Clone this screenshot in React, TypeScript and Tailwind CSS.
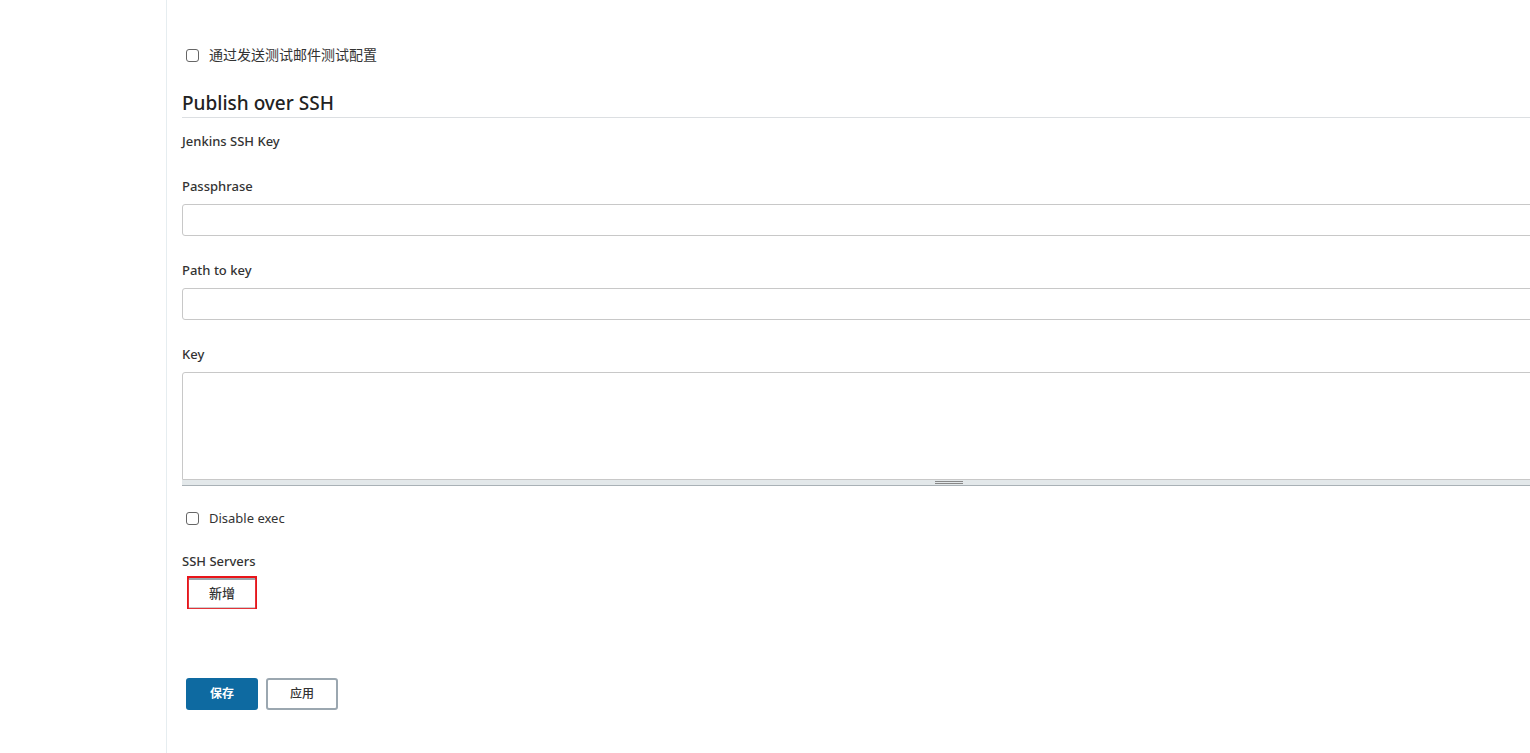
const font = { fontFamily: '"Noto Sans", "Noto Sans CJK SC", sans-serif' };

function Box() {
  return <span className="inline-block w-[13px] h-[13px] border border-[#666] rounded-[3px] bg-white shrink-0" />;
}

function Label({ children, className = "" }: { children: React.ReactNode; className?: string }) {
  return <div className={`text-[13px] leading-5 text-[#333] font-medium ${className}`}>{children}</div>;
}

export default function App() {
  return (
    <div className="flex w-[1530px] h-[753px] overflow-hidden bg-white" style={font}>
      <aside className="w-[167px] shrink-0 border-r border-[#e6edf0]" />
      <main className="pl-[15px] w-[1420px] shrink-0">
        <div className="flex items-center gap-[10px] mt-[45px] pl-1">
          <Box />
          <span className="text-[14px] leading-5 text-[#333]">通过发送测试邮件测试配置</span>
        </div>

        <h2 className="mt-[24px] text-[19px] leading-7 text-[#222] font-medium border-b border-[#dcdfe2]">
          Publish over SSH
        </h2>

        <Label className="mt-[13px]">Jenkins SSH Key</Label>

        <Label className="mt-[25px]">Passphrase</Label>
        <div className="mt-2 h-8 border border-[#c8c8c8] rounded-[3px]" />

        <Label className="mt-6">Path to key</Label>
        <div className="mt-2 h-8 border border-[#c8c8c8] rounded-[3px]" />

        <Label className="mt-6">Key</Label>
        <div className="mt-2">
          <div className="h-[108px] border border-[#c8c8c8] rounded-t-[3px]" />
          <div className="h-[6px] bg-[#e3e8ea] border-b border-[#a9b1b6] flex justify-center items-center">
            <div className="w-[28px] flex flex-col gap-[1px] ml-[128px]">
              <span className="h-px bg-[#888]" />
              <span className="h-px bg-[#888]" />
            </div>
          </div>
        </div>

        <div className="flex items-center gap-[10px] mt-[22px] pl-1">
          <Box />
          <span className="text-[13px] leading-5 text-[#333]">Disable exec</span>
        </div>

        <Label className="mt-[23px]">SSH Servers</Label>

        <div className="mt-[5px] ml-[5px] w-[70px] h-[33px] border-2 border-[#e8141a] flex">
          <button className="flex-1 m-0 border-t-2 border-[#9aa5ac] bg-white text-[13px] text-[#333] font-medium shadow-[0_1px_1px_#ccc]">
            新增
          </button>
        </div>

        <div className="flex gap-2 mt-[69px] ml-1">
          <button className="w-[72px] h-8 rounded-[3px] bg-[#0e6aa1] text-white text-[12px] font-bold">保存</button>
          <button className="w-[72px] h-8 rounded-[3px] border-2 border-[#9ba7b0] bg-white text-[#333] text-[12px] font-medium">应用</button>
        </div>
      </main>
    </div>
  );
}
